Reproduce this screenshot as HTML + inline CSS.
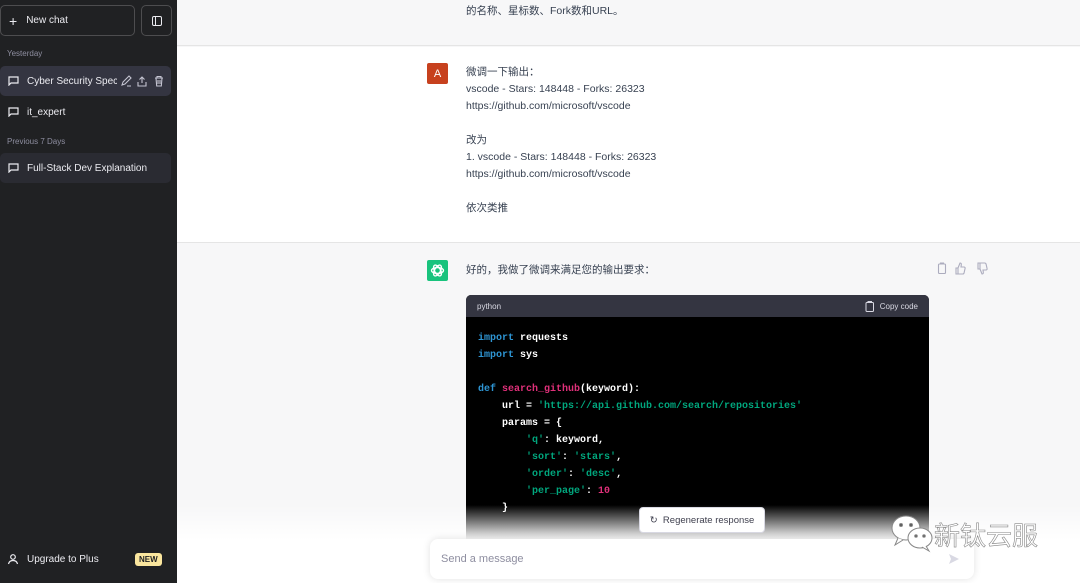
<!DOCTYPE html><html><head><meta charset="utf-8"><style>
*{box-sizing:border-box;margin:0;padding:0}
body{width:1080px;height:583px;overflow:hidden;position:relative;font-family:"Liberation Sans","Noto Sans CJK SC",sans-serif;background:#f7f7f8}
.sb{position:absolute;left:0;top:0;width:177px;height:583px;background:#202123;color:#ececf1;font-size:10px}
.nc{position:absolute;left:0;top:5px;width:135px;height:31px;border:1px solid #4d4d4f;border-radius:5px;display:flex;align-items:center;padding-left:8px}
.tg{position:absolute;left:141px;top:5px;width:31px;height:31px;border:1px solid #4d4d4f;border-radius:5px}
.lab{position:absolute;left:7px;font-size:8px;color:#8e8ea0}
.it{position:absolute;left:0;width:171px;height:30px;border-radius:5px;display:flex;align-items:center;padding-left:27px}
.ic{position:absolute;left:8px;top:10px}
.main{position:absolute;left:177px;top:0;width:903px;height:583px}
.row{position:absolute;left:0;width:903px}
.txt{position:absolute;left:289px;font-size:10.5px;line-height:17px;color:#374151}
.code{position:absolute;left:289px;top:295px;width:463px;height:260px;background:#000;border-radius:5px;overflow:hidden}
.ch{height:22px;background:#343541;color:#d9d9e3;font-size:8px;display:flex;align-items:center;justify-content:space-between;padding:0 11px}
pre{font-family:"Liberation Mono",monospace;font-size:10px;line-height:17px;color:#fff;padding:13px 12px;font-weight:bold}
.k{color:#2e95d3}.f{color:#df3079}.s{color:#00a67d}.n{color:#df3079}
.fade{position:absolute;left:0;top:505px;width:903px;height:78px;background:linear-gradient(rgba(255,255,255,0),#fff 45%)}
</style></head><body>
<div class="sb">
<div class="nc"><span style="font-size:14px;margin-right:9px">+</span>New chat</div>
<div class="tg"><div style="position:absolute;left:10px;top:10px;width:10px;height:10px;border:1.3px solid #ececf1;border-radius:2px"></div><div style="position:absolute;left:13px;top:10px;width:1.3px;height:10px;background:#ececf1"></div></div>
<div class="lab" style="top:49px">Yesterday</div>
<div class="it" style="top:66px;background:#343541"><svg class="ic" width="11" height="10" viewBox="0 0 11 10" fill="none" stroke="#ececf1" stroke-width="1.2"><path d="M1 1h9v6H3L1 9z"/></svg><span style="width:90px;overflow:hidden;white-space:nowrap">Cyber Security Speci</span>
<svg style="position:absolute;left:121px;top:9px" width="42" height="12" viewBox="0 0 42 12" fill="none" stroke="#c5c5d2" stroke-width="1.1"><path d="M1 10l1-3 6-6 2 2-6 6-3 1zM6 11h4"/><path d="M21 2v6M18.5 4.5L21 2l2.5 2.5M17 7v4h8V7"/><path d="M34 3h8M36 3V1.5h4V3M35 3l.7 8h4.6l.7-8M37 5v4M39 5v4"/></svg></div>
<div class="it" style="top:97px"><svg class="ic" width="11" height="10" viewBox="0 0 11 10" fill="none" stroke="#ececf1" stroke-width="1.2"><path d="M1 1h9v6H3L1 9z"/></svg>it_expert</div>
<div class="lab" style="top:137px">Previous 7 Days</div>
<div class="it" style="top:153px;background:#2a2b32"><svg class="ic" width="11" height="10" viewBox="0 0 11 10" fill="none" stroke="#ececf1" stroke-width="1.2"><path d="M1 1h9v6H3L1 9z"/></svg>Full-Stack Dev Explanation</div>
<div class="it" style="top:544px"><svg style="position:absolute;left:7px;top:9px" width="12" height="12" viewBox="0 0 12 12" fill="none" stroke="#ececf1" stroke-width="1.2"><circle cx="6" cy="4" r="2.3"/><path d="M1.5 11c.5-2.5 2.3-3.5 4.5-3.5s4 1 4.5 3.5"/></svg>Upgrade to Plus<span style="position:absolute;left:135px;background:#fae69e;color:#202123;font-size:8px;font-weight:bold;padding:2px 4px;border-radius:3px">NEW</span></div>
</div>
<div class="main">
<div class="row" style="top:0;height:46px;background:#f7f7f8;border-bottom:1px solid #e5e5e5"><div class="txt" style="top:3px">的名称、星标数、Fork数和URL。</div></div>
<div class="row" style="top:47px;height:196px;background:#fff;border-bottom:1px solid #e5e5e5">
<div style="position:absolute;left:250px;top:16px;width:21px;height:21px;background:#c7411e;color:#fff;font-size:11px;display:flex;align-items:center;justify-content:center;border-radius:2px">A</div>
<div class="txt" style="top:17px">微调一下输出：<br>vscode - Stars: 148448 - Forks: 26323<br>https://github.com/microsoft/vscode<br><br>改为<br>1. vscode - Stars: 148448 - Forks: 26323<br>https://github.com/microsoft/vscode<br><br>依次类推</div>
</div>
<div style="position:absolute;left:250px;top:260px;width:21px;height:21px;background:#19c37d;border-radius:2px"><svg width="21" height="21" viewBox="0 0 21 21" fill="none" stroke="#fff" stroke-width="1.3"><circle cx="10.5" cy="10.5" r="3"/><ellipse cx="10.5" cy="10.5" rx="6" ry="3" transform="rotate(60 10.5 10.5)"/><ellipse cx="10.5" cy="10.5" rx="6" ry="3" transform="rotate(-60 10.5 10.5)"/><ellipse cx="10.5" cy="10.5" rx="6" ry="3"/></svg></div>
<div class="txt" style="top:262px">好的，我做了微调来满足您的输出要求：</div>
<svg style="position:absolute;left:760px;top:262px" width="54" height="13" viewBox="0 0 54 13" fill="none" stroke="#acacbe" stroke-width="1.1"><rect x="1.5" y="2" width="7" height="9.5" rx="1"/><path d="M3.5 2V1h3v1"/><path d="M21 6v6h-2V6zM21 6l2-5c1 0 1.5.7 1.3 1.7L24 5h3c.8 0 1.3.7 1.1 1.4l-1 4.4c-.2.7-.7 1.2-1.4 1.2H21"/><path d="M43 7V1h-2v6zM43 7l2 5c1 0 1.5-.7 1.3-1.7L46 8h3c.8 0 1.3-.7 1.1-1.4l-1-4.4C48.9 1.5 48.4 1 47.7 1H43"/></svg>
<div class="code"><div class="ch"><span>python</span><span style="display:flex;align-items:center"><svg width="10" height="11" viewBox="0 0 10 11" fill="none" stroke="#d9d9e3" stroke-width="1"><rect x="1" y="1.5" width="7.5" height="9" rx="1"/><path d="M3 1.5V.5h3.5v1"/></svg>&nbsp; Copy code</span></div>
<pre><span class="k">import</span> requests
<span class="k">import</span> sys

<span class="k">def</span> <span class="f">search_github</span>(keyword):
    url = <span class="s">'https://api.github.com/search/repositories'</span>
    params = {
        <span class="s">'q'</span>: keyword,
        <span class="s">'sort'</span>: <span class="s">'stars'</span>,
        <span class="s">'order'</span>: <span class="s">'desc'</span>,
        <span class="s">'per_page'</span>: <span class="n">10</span>
    }</pre></div>
<div class="fade"></div>
<div style="position:absolute;left:462px;top:507px;width:126px;height:26px;background:#fff;border:1px solid #d9d9e3;border-radius:4px;font-size:9.5px;color:#40414f;display:flex;align-items:center;justify-content:center">↻&nbsp; Regenerate response</div>
<div style="position:absolute;left:253px;top:539px;width:544px;height:40px;background:#fff;border-radius:8px;box-shadow:0 0 8px rgba(0,0,0,.12);font-size:11px;color:#8e8ea0;padding:14px 11px">Send a message<svg style="position:absolute;right:14px;top:14px" width="12" height="12" viewBox="0 0 12 12"><path d="M1 1l10 5-10 5 2-5z" fill="#d9d9e3"/></svg></div>
<svg style="position:absolute;left:713px;top:513px" width="50" height="40" viewBox="0 0 50 40" fill="#fff" stroke="#888" stroke-width="1"><ellipse cx="16" cy="15" rx="14" ry="12"/><path d="M8 25l-3 7 8-5"/><ellipse cx="30" cy="25" rx="12" ry="10"/><path d="M36 33l3 5-7-4"/><circle cx="11" cy="12" r="1.5" fill="#555"/><circle cx="21" cy="12" r="1.5" fill="#555"/><circle cx="26" cy="23" r="1.3" fill="#555"/><circle cx="34" cy="23" r="1.3" fill="#555"/></svg>
<div style="position:absolute;left:757px;top:516px;font-size:26px;color:#fff;-webkit-text-stroke:0.6px #888;font-family:'Noto Sans CJK SC',sans-serif">新钛云服</div>
</div>
</body></html>
